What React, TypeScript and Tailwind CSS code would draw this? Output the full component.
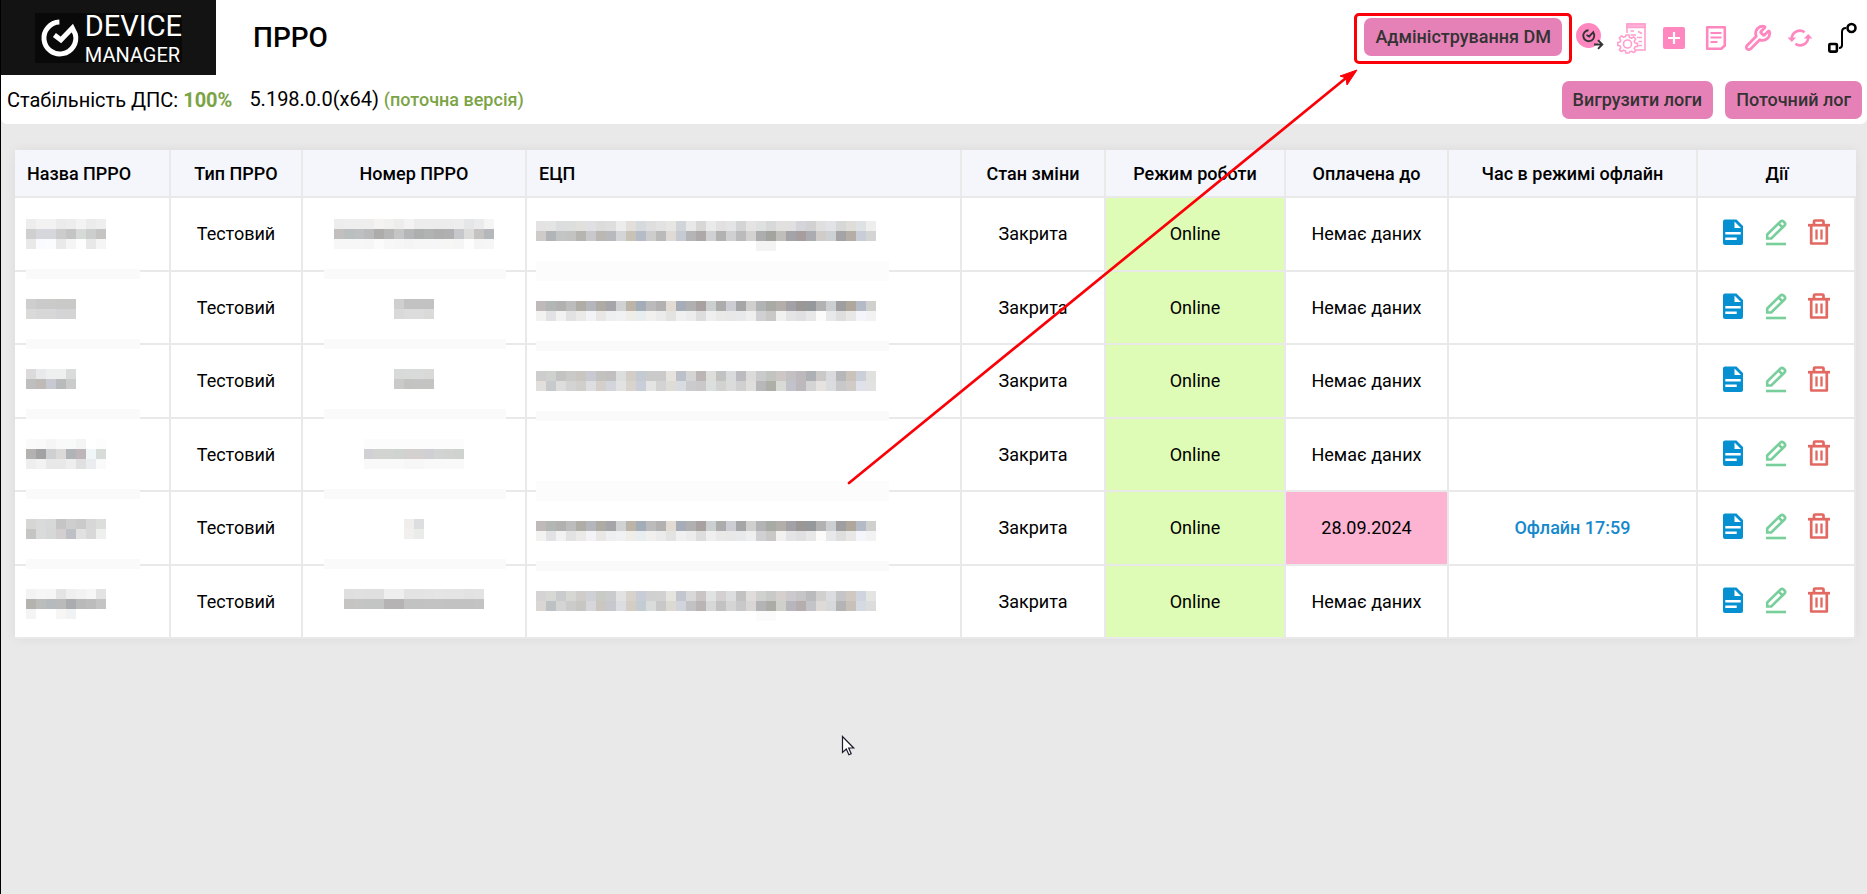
import type { ReactNode } from "react";
import { Wrench } from "lucide-react";

type Row = {
  type: string;
  shift: string;
  mode: string;
  paidUntil: string;
  expired?: boolean;
  offline?: string;
};

const rows: Row[] = [
  { type: "Тестовий", shift: "Закрита", mode: "Online", paidUntil: "Немає даних" },
  { type: "Тестовий", shift: "Закрита", mode: "Online", paidUntil: "Немає даних" },
  { type: "Тестовий", shift: "Закрита", mode: "Online", paidUntil: "Немає даних" },
  { type: "Тестовий", shift: "Закрита", mode: "Online", paidUntil: "Немає даних" },
  {
    type: "Тестовий",
    shift: "Закрита",
    mode: "Online",
    paidUntil: "28.09.2024",
    expired: true,
    offline: "Офлайн 17:59",
  },
  { type: "Тестовий", shift: "Закрита", mode: "Online", paidUntil: "Немає даних" },
];

const columns = [
  { name: "Назва ПРРО", width: "w-[156px]", align: "text-left" },
  { name: "Тип ПРРО", width: "w-[132px]", align: "text-center" },
  { name: "Номер ПРРО", width: "w-[224px]", align: "text-center" },
  { name: "ЕЦП", width: "", align: "text-left" },
  { name: "Стан зміни", width: "w-[144px]", align: "text-center" },
  { name: "Режим роботи", width: "w-[180px]", align: "text-center" },
  { name: "Оплачена до", width: "w-[163px]", align: "text-center" },
  { name: "Час в режимі офлайн", width: "w-[249px]", align: "text-center" },
  { name: "Дії", width: "w-[158px]", align: "text-center" },
];

// Hidden values: one line of 10px blocks each, x / y from the table corner
const blocks: [number, number, string][] = [
  // name
  [11, 69, "ededed f2f2f2 f2f2f2 ebebeb ededed f3f3f3 ebebeb eeeeee"],
  [11, 79, "cfcfcf d6d7dc d6d7dc cccccc c4c4c4 d5dad6 cccecd c5c4c3"],
  [11, 89, "e9e9e9 fafbfe fbfcfe e9e9e9 f5f5f5 fdfdfd e8e8e8 f5f5f5"],
  [11, 149, "cecece c9cac9 c9cac9 c9c9c8 c9c9c8"],
  [11, 159, "dadad9 d6d7d6 d6d7d6 d4d3d5 d4d4d4"],
  [11, 219, "dddadb e7e9ea eef0ef edf0ef d9dcdb"],
  [11, 229, "bfbebe bfbab6 c6c9d2 b8bbb9 cbcbcb"],
  [11, 289, "fafafa f9f9f9 f5f5f5 f9f9f9 f8faf9 f4f4f4 ffffff fdfdfd"],
  [11, 299, "b3b2b1 a2a1a3 cfd0d2 dbdad9 b1b4b6 bdb5b7 f0f5f8 d7dcd8"],
  [11, 309, "eeeeee f2f2f2 e8e8e8 e8e8e8 eeeeee e0e0e0 ebecef fafafa"],
  [11, 369, "d6d6d4 d9dada d7d9d8 c5c5c5 cecece cacaca d7d7d7 dbdedb"],
  [11, 379, "c5c5c3 d9dada d6d8d7 d3cecf bfc0c5 e1e1e1 d8d8d9 eef0ee"],
  [11, 439, "f3f3f3 f6f6f6 f5f5f5 e4e4e4 efefef f2f2f3 f6f6f6 e3e3e3"],
  [11, 449, "b4b3ae bbbdbd b5babf bbbaba abacaf b9b9b9 bcbcbc c4c4c4"],
  [11, 459, "f4f4f5 ffffff ffffff f8f6f5 f0f2f4"],
  // number
  [319, 69, "ededed eeeeee eeeeee eeeeee f4f3f1 f1f1f0 ededee f3f3f3 ececec ececec ececec ececec ededed e5e6e8 ebebeb f5f5f5"],
  [319, 79, "c3bfbe b9bebe bcc0c0 bababa adacab b6b6b7 c5c5c5 b5b6b8 adaeae b1b2b2 aeaeaf b0b0b2 c6c7cb dcdcdb c4c3c2 b6b7ba"],
  [319, 89, "f7f7f7 f7f7f7 f7f7f7 f6f6f6 fbfbfb f7f7f7 f6f6f6 f4f4f4 f6f6f6 f6f6f6 f6f6f6 f6f6f5 f5f5f5 fdfdfd f5f5f5 f6f6f6"],
  [379, 149, "cfcfd0 c2c2c2 c2c2c2 c2c2c2"],
  [379, 159, "d9d9da dbdcdb dbdcdb dadad9"],
  [379, 219, "d8dad9 d9dbda d9dbda d9d9d8"],
  [379, 229, "cacaca c3c3c2 c3c4c3 c4c4c3"],
  [349, 289, "fcfcfc fcfcfc fcfcfc fcfcfc fcfcfc fcfcfc fcfcfc fcfcfc fcfcfc fcfcfc"],
  [349, 299, "d1d1d5 d1d4d1 d1d4d1 d0d4d0 d4d0cf d4d0cf d0d0d4 d1d4d3 d1d3d1 cfd3d0"],
  [349, 309, "f9f9f9 f9f9f9 f9f9f9 f9f9f9 f7f7f7 f7f7f7 f9f9f9 f9f9f9 f9f9f9 f9f9f9"],
  [389, 369, "efeeed dddedf"],
  [389, 379, "f1f0ef eaecea"],
  [329, 439, "dfdfdf e0e0e0 dfdfdf dfdfdf eeeeee eeeeee e3e3e3 e3e3e3 e4e4e4 e4e5e4 e4e4e4 e4e4e4 e2e2e2 e3e3e3"],
  [329, 449, "c5c4c3 c5c5c4 c3c5c5 c3c5c5 b5b3b3 b5b3b3 c2c2c2 c2c2c2 c3c3c3 c3c3c3 c2c2c2 c2c2c2 c2c2c2 c3c3c3"],
  // signature
  [521, 71, "e4e2e3 e2e5e2 dcddde dcdddd e1e0dc dfdfe4 dcdcdb dededf ececec e1dedb d7dadd dededf e2e2e3 e8e6e3 d2d5d8 e8e8e8 d8d7d5 e8ebe9 e2e0e0 e3e4e6 d3d5d4 e5e4e2 dfe1e1 d7d9d8 e2e0df e2dfe0 d4d5db d1d1d2 e0dfdf e2e3e6 d6d8d7 dfddd8 dfe2e5 eeeeed"],
  [521, 81, "cfcbc8 b1b5b7 c3c4c4 c3c3c2 b6b5b0 c9c8cd bbb7b2 b8b9be d3d5d7 c9c2b7 b5bcc7 cdcdcd bababa dfdad5 c5cad3 b5b5b8 aea8a8 d0d1d3 b2b2b2 d0d0d2 bbbabd d3d2d1 adadaf a3a49e bfbeba a4a3a8 a79d9e aaacb1 cfccc9 cdd1d4 a4a4a7 b4aea7 c9cdd7 d4d4d4"],
  [741, 91, "f3f3f3 f3f3f3"],
  [521, 151, "c0b9ba b2b7b5 b1b1b0 bcbcbc afada5 b5b5bc aeaba4 a6a5a9 cfd1d3 bdb4a9 a2adb7 bbbbbb b3b0b1 e1dbd3 a6adb8 b0b0b0 a8a19f cbcfcf acacac cccdd2 a5a6a7 d0cfce b2b3b5 a8aaa4 b4aeab a3a1a5 9c9797 95999b b2b2b2 cbcfd2 9f9fa1 afa79b b4bbc7 d0d0cf"],
  [521, 161, "f2f2f1 e2e2e4 f2f2f2 e2e2e2 ebeae8 f3f3f7 e8e7e5 eeeff1 f0f1f2 eeede8 e8edf0 f1f0ee ebebeb e3e3e1 f0f0f0 ececec dddddd efefef e9e9e8 e8e8e8 e8e9eb efefef d0d0d2 c9c8c6 f1f1ef e4e4e7 e0dfe1 e8e8e8 fcfbf9 e6e8ea dededf e9e7e6 f3f5fa f2f2f2"],
  [521, 221, "cecdce cfd1cf c3c3c4 c9c9c8 c9c6c1 c9cad1 c3c2c0 c1bfc0 dcdedd d3cdc7 c3cad2 cacaca cacaca e6e3de bcc0c8 d3d4d3 bbb5b6 dddeda c2c2c2 d9dadb bcbcc0 dcdbda c9cacc c2c4c0 ccc7c5 c2c0c3 bcb8bc adb1b5 cac9c8 d8dadd b5b7b9 c9c3bc cacfd8 e0e0df"],
  [521, 231, "e1dedc c8c9cd dddddd d3d3d3 d0cfcc dedee1 d4cfc9 d2d6dc e2e2e2 d9d3cd c9cdd8 e4e4e4 d3d3d3 dfdbd7 d8dbe0 cbcacc cac8c8 dbe0df d2d2d0 dbdbdb d1d0d1 dfdedd b8b8ba aeafa7 d8dad6 c2c3ca bdb8bb d4d4d4 e5e2df dbdce0 c8c7ca d0cbc7 dfe2eb e2e2e2"],
  [521, 371, "c0b9ba b2b7b5 b1b1b0 bcbcbc afada5 b5b5bc aeaba4 a6a5a9 cfd1d3 bdb4a9 a2adb7 bbbbbb b3b0b1 e1dbd3 a6adb8 b0b0b0 a8a19f cbcfcf acacac cccdd2 a5a6a7 d0cfce b2b3b5 a8aaa4 b4aeab a3a1a5 9c9797 95999b b2b2b2 cbcfd2 9f9fa1 afa79b b4bbc7 d0d0cf"],
  [521, 381, "f2f2f1 e2e2e4 f2f2f2 e2e2e2 ebeae8 f3f3f7 e8e7e5 eeeff1 f0f1f2 eeede8 e8edf0 f1f0ee ebebeb e3e3e1 f0f0f0 ececec dddddd efefef e9e9e8 e8e8e8 e8e9eb efefef d0d0d2 c9c8c6 f1f1ef e4e4e7 e0dfe1 e8e8e8 fcfbf9 e6e8ea dededf e9e7e6 f3f5fa f2f2f2"],
  [521, 441, "d5d3d4 d5d8d5 cacbcd d6d6d3 cfccc9 cfd0d6 c9c9c6 cacbcc e2e2e2 d8d2cc c8ccd6 d0d0d1 d1d1d1 e6e4df c3c5cf d8d8d8 cac5c4 e1e3e2 d4d0d1 dcdddf c2c2c2 dfdcdb cfd0d0 c8cac8 d5d0cd cbc9cb c5c4c7 b9bbbd d2d0ce dbdcdf c5c5c8 d0c9c2 d0d4df e4e4e3"],
  [521, 451, "dad6d3 bdc1c4 d4d4d5 cbccca c7c6c2 d6d6db cbc6c0 c7c8cd dbdde0 d3cdc4 c3cbd3 dadbdb c8c8c8 dcd8d2 d1d4db c2c2c4 bab5b4 d6d8d7 c2c2c2 d5d5d5 c8c8cb dbd6d6 b4b4b6 abaca5 cfcfcc b7b6bc b5adae c3c4c7 dddad8 d6d8da b4b4b6 c8c1ba d5d9e2 dcdcdc"],
  [741, 461, "fbfbfb fbfbfb"],
];

const strips = [119, 189, 259, 339, 409];
const wideStrips: [number, number][] = [
  [111, 20],
  [191, 10],
  [261, 10],
  [331, 20],
  [411, 10],
];

const Redaction = () => (
  <svg
    className="absolute left-0 top-0 pointer-events-none"
    width="880"
    height="487"
    shapeRendering="crispEdges"
    aria-hidden="true"
  >
    {strips.map((y) => (
      <g key={y} fill="#fafafa">
        <rect x="11" y={y} width="114" height="10" />
        <rect x="309" y={y} width="182" height="10" />
      </g>
    ))}
    {wideStrips.map(([y, height]) => (
      <rect
        key={y}
        x="521"
        y={y}
        width="353"
        height={height}
        fill={height === 20 ? "#fcfcfc" : "#fafafa"}
      />
    ))}
    {blocks.map(([x, y, line]) =>
      line
        .split(" ")
        .map((color, idx) => (
          <rect
            key={`${x}-${y}-${idx}`}
            x={x + idx * 10}
            y={y}
            width="10"
            height="10"
            fill={`#${color}`}
          />
        ))
    )}
  </svg>
);

const Logo = () => (
  <div className="w-[215px] h-[75px] bg-[#131313] flex items-center justify-center">
    <div className="w-[147px] h-[50px] bg-[#090909] flex items-center text-white">
      <svg width="50" height="50" viewBox="0 0 50 50" fill="none" aria-hidden="true">
        <path
          d="M24.500 9A16 16 0 1 0 40.500 21L37.500 15 26 27l-6.500-5"
          stroke="#fff"
          strokeWidth="5"
        />
      </svg>
      <div className="flex flex-col">
        <span className="text-[29px] leading-[34px]">DEVICE</span>
        <span className="text-[20px] leading-[24px]">MANAGER</span>
      </div>
    </div>
  </div>
);

const PinkButton = ({ children }: { children: ReactNode }) => (
  <button className="h-[38px] px-[11px] rounded-[7px] bg-[#e681b8] text-[#333] text-[18px] leading-[20px] font-medium whitespace-nowrap">
    {children}
  </button>
);

const IconButton = ({ label, children }: { label: string; children: ReactNode }) => (
  <button
    className="w-[30px] h-[32px] flex items-center justify-center text-[#ff87c0]"
    aria-label={label}
  >
    {children}
  </button>
);

const Toolbar = () => (
  <div className="flex items-center gap-[12px]">
    <IconButton label="Вхід">
      <svg width="30" height="32" viewBox="0 0 30 32" fill="none">
        <circle cx="13.500" cy="13.500" r="12.500" fill="#ff87c0" />
        <path
          d="M13.500 8.200a5.500 5.500 0 1 0 5.700 4.600l-1-2.600-4 4.300-2.700-1.500"
          stroke="#333"
          strokeWidth="1.900"
        />
        <path d="M19 22.500h8M23 18.200l4.300 4.300-4.300 4.300" stroke="#333" strokeWidth="1.900" />
      </svg>
    </IconButton>
    <IconButton label="Налаштування">
      <svg width="30" height="32" viewBox="0 0 30 32" fill="none" stroke="#ff9fce" strokeWidth="1.600">
        <path d="M10 11V2h18v26H19" />
        <path d="M10 2h18v3.500H10z" fill="#ffb3d9" />
        <path d="M13.500 9H17M13.500 13H19M21 9.500l4 2M20 15.500h5M21.500 19.500h3.500M21.500 23.500h3.500" />
        <circle cx="10.500" cy="22" r="4" />
        <path
          d="M9 13h3l.5 2.500 2 .8 2-1.500 2.200 2.200-1.500 2.100.8 1.900 2.500.4v3l-2.500.4-.8 2 1.500 2-2.200 1.700-2-1.300-2 .8L12 31H9l-.5-2-2-.8-2 1.300-2.200-1.700 1.500-2-.8-2L.8 23.400v-2.800l2.200-.6.8-1.900-1.500-2.100 2.200-2.200 2 1.500 2-.8z"
          strokeLinejoin="round"
        />
      </svg>
    </IconButton>
    <IconButton label="Додати">
      <svg width="24" height="24" viewBox="0 0 24 24">
        <rect x="1" y="1" width="22" height="22" rx="2" fill="#ff87c0" />
        <path d="M12 6v12M6 12h12" stroke="#fff" strokeWidth="2.200" />
      </svg>
    </IconButton>
    <IconButton label="Журнал">
      <svg width="22" height="26" viewBox="0 0 22 26" fill="none" stroke="#ff87c0" strokeWidth="2.600">
        <path d="M2.200 2.200h17.600V20.500l-3.500 3.300H2.200z" strokeLinejoin="round" />
        <path d="M5.500 8h11M5.500 12.500h11M5.500 17h7" strokeWidth="2.200" />
      </svg>
    </IconButton>
    <IconButton label="Сервіс">
      <Wrench size={28} strokeWidth={2.400} />
    </IconButton>
    <IconButton label="Оновити">
      <svg width="26" height="26" viewBox="0 0 26 26" fill="none">
        <path
          d="M4.800 13.500a8 8 0 0 1 12.800-6.200M21.200 12.500a8 8 0 0 1-12.800 6.200"
          stroke="currentColor"
          strokeWidth="2.600"
        />
        <path d="M.5 12.500h8.600l-4.300 4.600zM16.900 13.500h8.600l-4.300-4.600z" fill="currentColor" />
      </svg>
    </IconButton>
    <IconButton label="Маршрут">
      <svg width="30" height="32" viewBox="0 0 30 32" fill="none" stroke="#000" strokeWidth="2.600">
        <rect x="2.300" y="22" width="7.600" height="7.600" rx="1" />
        <circle cx="24.500" cy="6" r="4" />
        <path d="M12 26c2.500 0 3-1 3-3V10c0-3 1-4 4-4" strokeWidth="2" />
      </svg>
    </IconButton>
  </div>
);

const RowActions = () => (
  <div className="flex items-center justify-center gap-[17px] pb-[4px]">
    <button aria-label="Звіт">
      <svg width="26" height="28" viewBox="0 0 26 28">
        <path d="M5 1.500h11.500L23 8v17a2 2 0 0 1-2 2H5a2 2 0 0 1-2-2V3.500a2 2 0 0 1 2-2z" fill="#0590d2" />
        <path d="M14.500 3.500L21 10h-6.500zM5.300 14h15.400v2.500H5.300zM5.300 19.500h11.400V22H5.300z" fill="#fff" />
      </svg>
    </button>
    <button aria-label="Редагувати">
      <svg width="26" height="28" viewBox="0 0 26 28" fill="none" stroke="#79cf9c" strokeWidth="2.600">
        <path d="M4.200 16.500L17.500 3.500a2.200 2.200 0 0 1 3 0l1 1a2.200 2.200 0 0 1 0 3L8.300 20.500H4.200z" />
        <path d="M15.500 5.500l4 4" />
        <path d="M3 26h20" strokeWidth="2.600" />
      </svg>
    </button>
    <button aria-label="Видалити">
      <svg width="26" height="28" viewBox="0 0 26 28" fill="none" stroke="#e26861" strokeWidth="2.700">
        <path d="M2 7.200h22" />
        <path d="M8 7V3.500a1 1 0 0 1 1-1h7.500a1 1 0 0 1 1 1V7" />
        <path d="M5.200 7v18.500h15.600V7" strokeLinejoin="round" />
        <path d="M10.500 11.500V21.500M15.500 11.500V21.500" strokeWidth="2.300" />
      </svg>
    </button>
  </div>
);

const App = () => {
  const cell = "border-r-2 border-b-2 border-[#e9e9e9] px-[12px]";

  return (
    <div className="relative min-h-screen overflow-hidden border-l border-black bg-[#e9e9e9] font-['Roboto',sans-serif] text-black">
      <header className="flex items-center bg-white">
        <Logo />
        <h1 className="ml-[37px] text-[28px] leading-[32px] font-medium">ПРРО</h1>
        <div className="ml-auto mr-[10px] flex items-center gap-[3px]">
          <div className="mt-[2px] rounded-[5px] border-3 border-[#fb0007] px-[7px] pt-[2px] pb-[5px]">
            <PinkButton>Адміністрування DM</PinkButton>
          </div>
          <Toolbar />
        </div>
      </header>

      <section className="flex items-center h-[49px] rounded-b-md bg-white pl-[6px] pr-[5px] text-[20px] leading-[24px]">
        <p>
          Стабільність ДПС: <b className="font-bold text-[#7ba446]">100%</b>
        </p>
        <p className="ml-[17px]">
          5.198.0.0(x64){" "}
          <span className="text-[18px] font-medium text-[#7ba446]">(поточна версія)</span>
        </p>
        <div className="ml-auto flex gap-[12px]">
          <PinkButton>Вигрузити логи</PinkButton>
          <PinkButton>Поточний лог</PinkButton>
        </div>
      </section>

      <main className="relative mt-[26px] ml-[14px] mr-[11px] rounded-sm shadow-[0_0_12px_rgba(0,0,0,0.06)]">
        <table className="w-full table-fixed border-separate border-spacing-0 bg-white text-[18px] leading-[24px]">
          <thead>
            <tr className="h-[48px] bg-[#f4f6fc]">
              {columns.map((column) => (
                <th
                  key={column.name}
                  className={`${cell} ${column.width} ${column.align} pt-[2px] font-medium last:border-r-0`}
                >
                  {column.name}
                </th>
              ))}
            </tr>
          </thead>
          <tbody>
            {rows.map((row, idx) => (
              <tr key={idx} className="h-[74px] even:h-[73px] text-center">
                <td className={cell} />
                <td className={cell}>{row.type}</td>
                <td className={cell} />
                <td className={cell} />
                <td className={cell}>{row.shift}</td>
                <td className={`${cell} bg-[#dffcb6]`}>{row.mode}</td>
                <td className={`${cell} ${row.expired ? "bg-[#fdb4d3]" : ""}`}>
                  {row.paidUntil}
                </td>
                <td className={`${cell} font-medium text-[#1689cc]`}>{row.offline}</td>
                <td className={`${cell} border-r-0`}>
                  <RowActions />
                </td>
              </tr>
            ))}
          </tbody>
        </table>
        <Redaction />
      </main>

      {/* Pointer to the admin button */}
      <svg
        className="absolute right-[509px] top-[68px] pointer-events-none"
        width="512"
        height="418"
        aria-hidden="true"
      >
        <path d="M3 415L500 10" stroke="#fb0007" strokeWidth="2.700" strokeLinecap="round" />
        <path d="M511 2L494 8l6 2 1 7z" fill="#fb0007" stroke="#fb0007" />
      </svg>

      {/* Mouse cursor */}
      <svg
        className="absolute left-[840px] top-[735px] pointer-events-none"
        width="16"
        height="22"
        viewBox="0 0 16 22"
        aria-hidden="true"
      >
        <path
          d="M1.500 1.500v16l3.800-3.500 2.600 5.700 2.300-1-2.500-5.700h5z"
          fill="#fff"
          stroke="#1c1c2c"
          strokeWidth="1.200"
        />
      </svg>
    </div>
  );
};

export default App;
